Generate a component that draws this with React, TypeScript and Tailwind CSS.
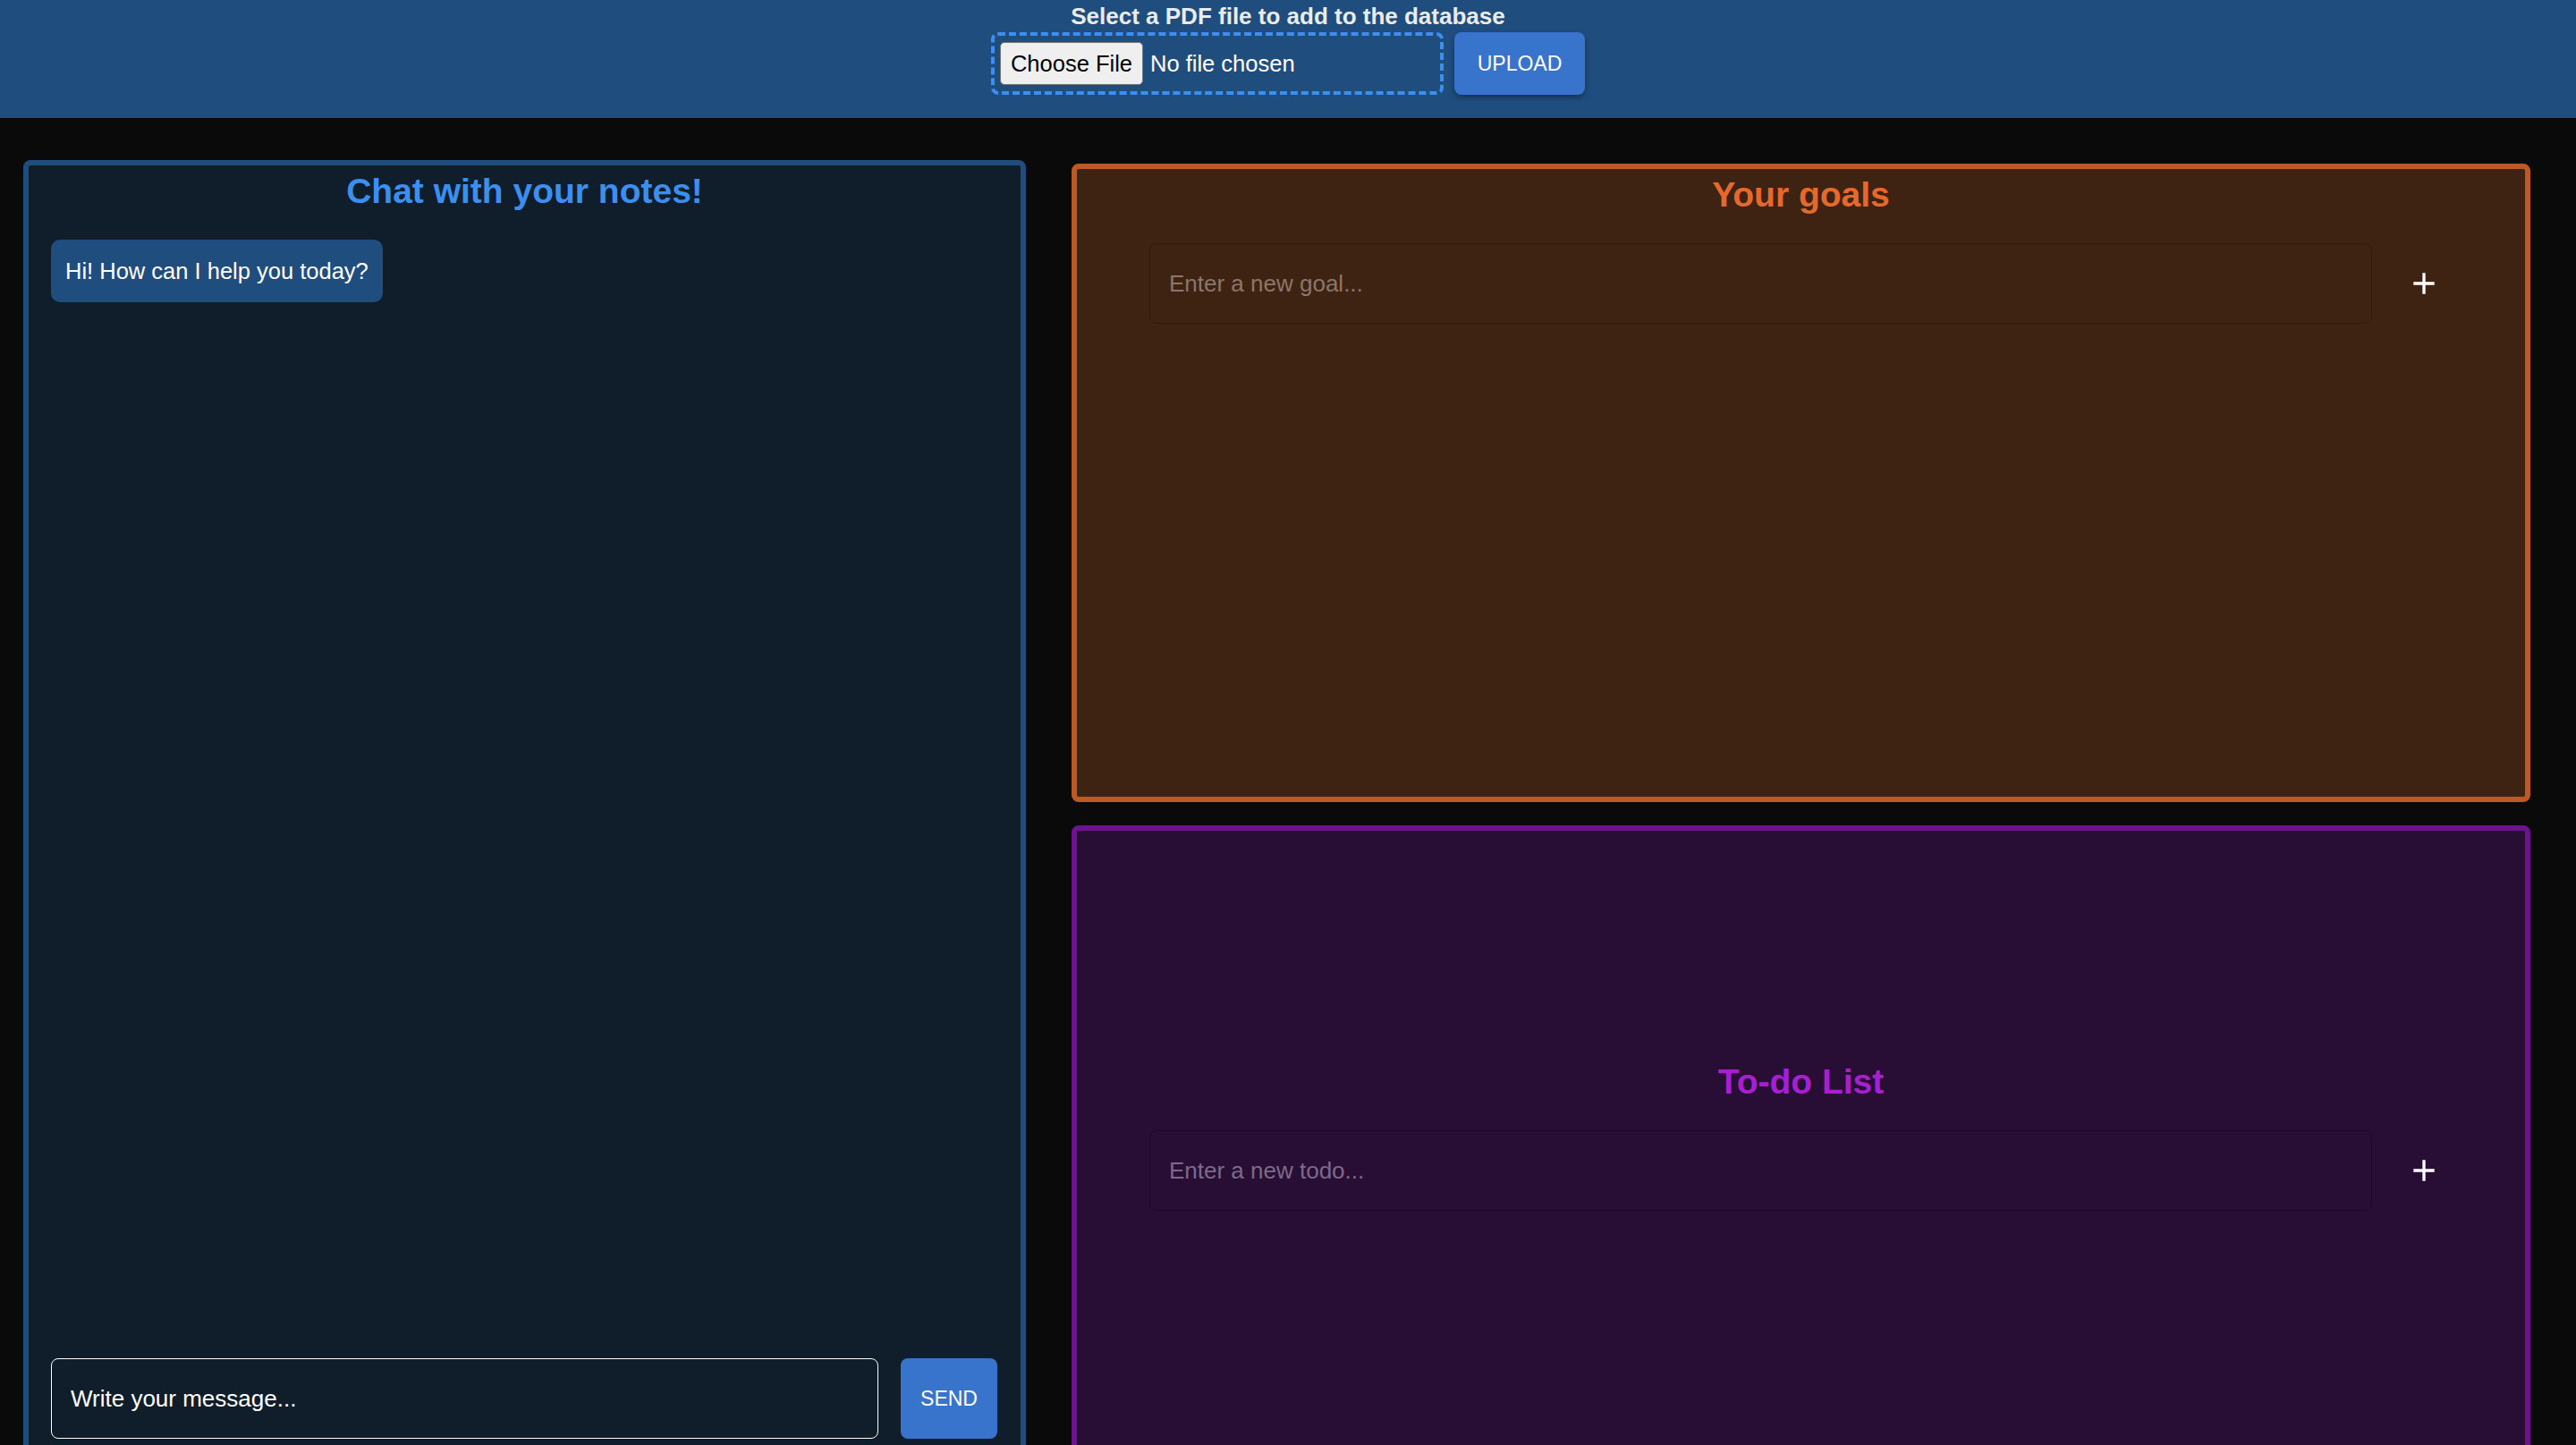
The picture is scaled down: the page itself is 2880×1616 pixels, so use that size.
const font = "font-['Liberation_Sans',Arial,sans-serif]";

function PlusIcon() {
  return (
    <svg viewBox="0 0 24 24" className="size-10 fill-white">
      <path d="M19 13h-6v6h-2v-6H5v-2h6V5h2v6h6v2z" />
    </svg>
  );
}

function ListPanel({
  title,
  placeholder,
  className,
  titleClass,
  placeholderClass,
  bodyClass,
}: {
  title: string;
  placeholder: string;
  className: string;
  titleClass: string;
  placeholderClass: string;
  bodyClass: string;
}) {
  return (
    <section className={`flex h-[714px] flex-col rounded-lg border-[6px] ${className} ${bodyClass}`}>
      <h2 className={`pt-[1px] text-center text-[39px] leading-[56px] font-bold ${titleClass}`}>{title}</h2>
      <div className="mt-[26px] mb-[26px] flex items-center gap-[22px] pr-[77px] pl-[81px]">
        <input
          placeholder={placeholder}
          className={`h-[90px] flex-1 rounded-lg border bg-transparent px-[21px] pt-[1px] text-[26px] outline-none ${placeholderClass}`}
        />
        <button className="flex size-[72px] items-center justify-center">
          <PlusIcon />
        </button>
      </div>
    </section>
  );
}

export default function App() {
  return (
    <div className={`h-[1616px] overflow-hidden bg-[#0a0a0a] ${font}`}>
      {/* Upload bar */}
      <header className="flex h-[132px] flex-col items-center bg-[#1f4e7e]">
        <p className="text-[26px] leading-9 font-bold text-[#ebebeb]">Select a PDF file to add to the database</p>
        <div className="flex justify-center gap-3">
          <div className="flex h-[70px] w-[506px] items-center rounded-lg border-4 border-dashed border-[#3b8ff0] pl-[6px]">
            <button className="h-12 w-40 rounded-[5px] border border-[#767676] bg-[#efefef] text-[25.5px] text-black">
              Choose File
            </button>
            <span className="ml-2 text-[25.5px] text-white">No file chosen</span>
          </div>
          <button className="h-[70px] w-[146px] rounded-lg bg-[#3874cb] text-[23px] text-white uppercase shadow-[0_3px_6px_rgba(0,0,0,0.35)]">
            Upload
          </button>
        </div>
      </header>

      <main className="flex items-start gap-[51px] pt-[47px] pr-[51px] pl-[26px]">
        {/* Chat */}
        <section className="flex h-[1462px] w-[1121px] flex-col rounded-lg border-[6px] border-[#1f4e7e] bg-[#101e2c]">
          <h2 className="pt-[1px] text-center text-[39px] leading-[56px] font-bold text-[#3b8ff0]">Chat with your notes!</h2>
          <div className="flex-1 px-[25px] pt-[26px]">
            <div className="w-fit rounded-[10px] bg-[#1f4e7e] px-4 pt-[18px] pb-[18px] text-[25.5px] leading-[34px] text-white">
              Hi! How can I help you today?
            </div>
          </div>
          <div className="flex gap-[25px] pr-[26px] pb-[26px] pl-[25px]">
            <input
              placeholder="Write your message..."
              className="h-[90px] flex-1 rounded-lg border border-white bg-transparent px-[21px] pt-[1px] text-[26px] text-white outline-none placeholder:text-white"
            />
            <button className="h-[90px] w-[108px] rounded-lg bg-[#3874cb] text-[23px] text-white uppercase">Send</button>
          </div>
        </section>

        <div className="flex flex-1 flex-col gap-[26px] pt-1">
          <ListPanel
            title="Your goals"
            placeholder="Enter a new goal..."
            className="border-[#bb5a24]"
            bodyClass="bg-[#3e2312]"
            titleClass="text-[#e5692c]"
            placeholderClass="border-[#30190c] text-white placeholder:text-[#8b766a]"
          />
          <ListPanel
            title="To-do List"
            placeholder="Enter a new todo..."
            className="justify-center border-[#6f1290]"
            bodyClass="bg-[#280e35]"
            titleClass="text-[#a81fd0]"
            placeholderClass="border-[#1d0927] text-white placeholder:text-[#7e6a88]"
          />
        </div>
      </main>
    </div>
  );
}
